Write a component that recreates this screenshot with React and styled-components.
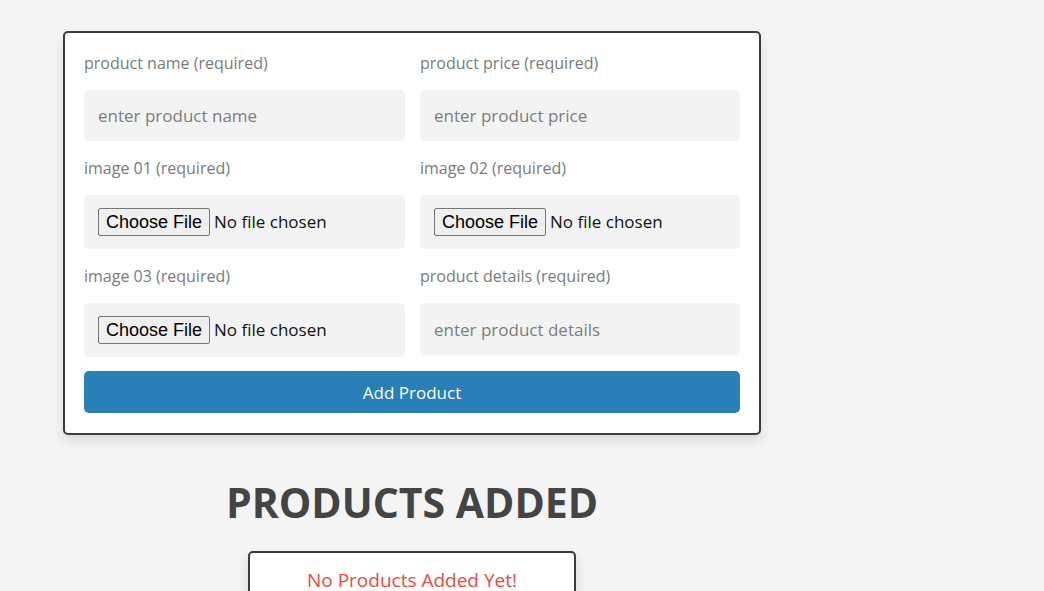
import React from "react";
import styled, { createGlobalStyle } from "styled-components";

const Global = createGlobalStyle`
  * { box-sizing: border-box; }
  html, body { margin: 0; padding: 0; background: #f4f4f4; }
  body { font-family: "Open Sans", "Noto Sans", sans-serif; }
`;

const Page = styled.main`
  padding: 31px 0 0 63px;
  width: 761px;
`;

const Card = styled.form`
  background: #fff;
  border: 2px solid #3b3b3b;
  border-radius: 5px;
  box-shadow: 0 6px 12px rgba(0, 0, 0, 0.1);
  padding: 20px 19px 20px 19px;
`;

const Grid = styled.div`
  display: grid;
  grid-template-columns: 321px 320px;
  column-gap: 15px;
  row-gap: 17px;
`;

const Field = styled.div`
  display: flex;
  flex-direction: column;
`;

const Label = styled.span`
  display: block;
  font-size: 16px;
  line-height: 20px;
  color: #7a7a7a;
  margin-bottom: 17px;
`;

const TextInput = styled.input`
  height: ${(p) => p.$h || 51}px;
  border: none;
  outline: none;
  background: #f3f3f3;
  border-radius: 5px;
  padding: 0 14px;
  font-family: "Open Sans", sans-serif;
  font-size: 17px;
  color: #333;
  &::placeholder { color: #7d7d7d; }
`;

const FileBox = styled.div`
  height: 54px;
  background: #f3f3f3;
  border-radius: 5px;
  padding: 0 14px;
  display: flex;
  align-items: center;
`;

const FileInput = styled.input`
  font-family: "Open Sans", sans-serif;
  font-size: 17px;
  color: #111;
  &::file-selector-button {
    font-family: "Liberation Sans", Arial, sans-serif;
    font-size: 18px;
    color: #000;
    background: #efefef;
    border: 1px solid #767676;
    border-radius: 2px;
    padding: 1px 7px;
    margin-right: 4px;
    height: 28px;
  }
`;

const Submit = styled.button`
  width: 100%;
  margin-top: 14px;
  height: 42px;
  border: none;
  border-radius: 5px;
  background: #2980b9;
  color: #fff;
  font-family: "Open Sans", sans-serif;
  font-size: 17px;
`;

const Section = styled.section`
  display: flex;
  flex-direction: column;
  align-items: center;
`;

const Heading = styled.h1`
  margin: 42px 0 24px;
  font-family: "Open Sans", sans-serif;
  font-size: 41px;
  line-height: 50px;
  font-weight: 700;
  color: #444;
  text-transform: uppercase;
`;

const Empty = styled.div`
  width: 328px;
  background: #fff;
  border: 2px solid #3b3b3b;
  border-radius: 5px;
  box-shadow: 0 6px 12px rgba(0, 0, 0, 0.1);
  padding: 13px 20px 20px;
  text-align: center;
  font-size: 19px;
  line-height: 28px;
  color: #e74c3c;
`;

function TextField({ label, placeholder, h }) {
  return (
    <Field>
      <Label>{label}</Label>
      <TextInput type="text" placeholder={placeholder} $h={h} />
    </Field>
  );
}

function FileField({ label }) {
  return (
    <Field>
      <Label>{label}</Label>
      <FileBox>
        <FileInput type="file" />
      </FileBox>
    </Field>
  );
}

export default function App() {
  return (
    <>
      <Global />
      <Page>
        <Card onSubmit={(e) => e.preventDefault()}>
          <Grid>
            <TextField label="product name (required)" placeholder="enter product name" />
            <TextField label="product price (required)" placeholder="enter product price" />
            <FileField label="image 01 (required)" />
            <FileField label="image 02 (required)" />
            <FileField label="image 03 (required)" />
            <TextField label="product details (required)" placeholder="enter product details" h={53} />
          </Grid>
          <Submit type="submit">Add Product</Submit>
        </Card>
        <Section>
          <Heading>products added</Heading>
          <Empty>No Products Added Yet!</Empty>
        </Section>
      </Page>
    </>
  );
}
